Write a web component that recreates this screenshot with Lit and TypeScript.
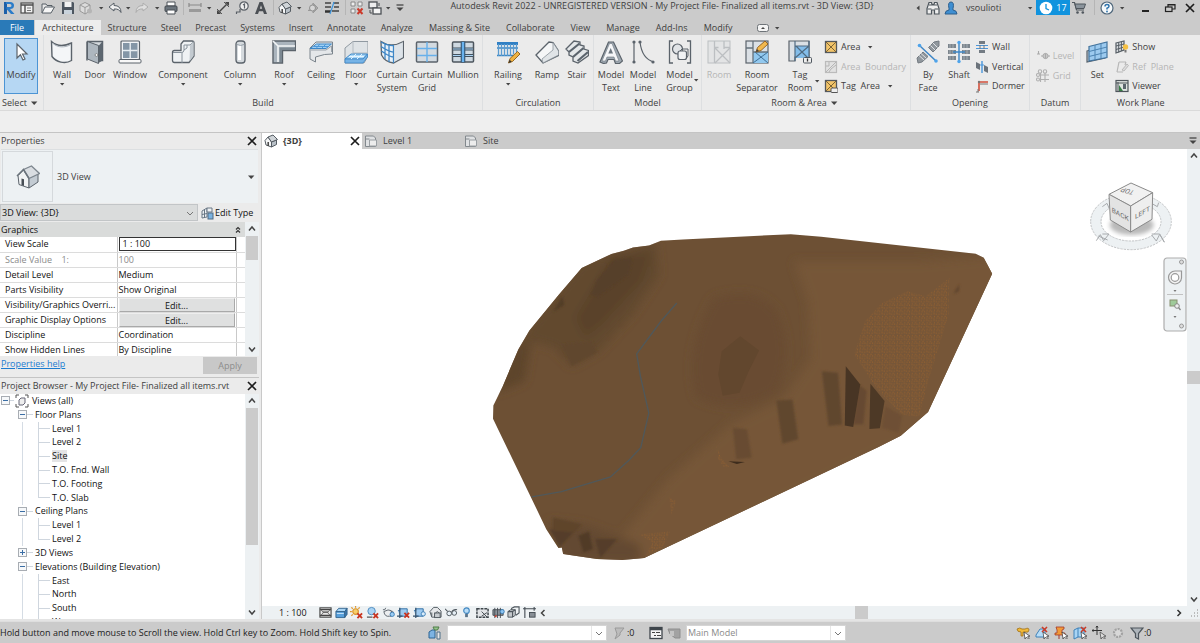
import { LitElement, html, svg, css, nothing } from "lit";
import { customElement, property } from "lit/decorators.js";

/* ---------- icons: large ones on a 24 grid, small ones on a 14 grid ---------- */

const G = "#5b636b";
const B = "#3d86c6";

const BIG: Record<string, unknown> = {
  cursor: svg`<path d="M8 4v14l3.400-3.200 2.600 5.200 2-1-2.500-5H18z" fill="#fff" stroke="${G}" stroke-width="1.200"/>`,
  house: svg`<path d="M2 10.500L7.500 5 13 13v10L3 19.500z" fill="#f1f3f4" stroke="${G}"/><path d="M13 13l9-4.500V17l-9 6z" fill="#c3cbd2" stroke="${G}"/><path d="M7.500 4.500L15.500 1l8 7.500L13 13.500z" fill="#d9dde1" stroke="#7d868e" stroke-width="1.300"/><path d="M1 11l6.500-6.500L13 13.500" fill="none" stroke="#6b747c" stroke-width="1.500"/><path d="M5.500 13.500l2.500.8V21l-2.500-1z" fill="#474e55"/>`,
  wall: svg`<path d="M1.500 1.500C7 6.500 15 6 21.500 3v17.500C15 24.500 6 22 2 16.500z" fill="#f4f6f8" stroke="${G}" stroke-width="1.400"/><path d="M3 3.500C8 8 15 7.500 20 5" fill="none" stroke="#aab2ba"/>`,
  door: svg`<path d="M4 1.500h15.500v19H16M4 20.500V1.500" fill="#d5dade" stroke="${G}" stroke-width="1.500"/><path d="M19.500 1.500v19l-4 2.500V6z" fill="#5d6770"/><path d="M4.500 1.500l11 4v18l-11-4.500z" fill="#aeb7bf" stroke="${G}"/><circle cx="13.500" cy="15" r="1.400" fill="#fff" stroke="#555" stroke-width=".6"/>`,
  window: svg`<rect x="3" y="1" width="18.500" height="18.500" rx="1" fill="#f1f3f5" stroke="${G}" stroke-width="1.200"/><path d="M5 3h14.500v15H5z" fill="#8496a6"/><path d="M12.200 3v15M5 10.500h14.500" stroke="#e8eef2" stroke-width="1.400"/><rect x="1" y="19.500" width="22" height="3.500" rx="1" fill="#f8f8f8" stroke="${G}"/>`,
  component: svg`<path d="M1.500 12.500q0-2 2-2H10V4l2.500-3H21q2 0 2 2v13l-5 6.500H3.500q-2 0-2-2z" fill="#eff2f4" stroke="${G}" stroke-width="1.300"/><path d="M2 12.500h8.500q2.500 0 2.500-2.500V5h6l4-3.500M11 12v11M13 10l3-2V5" fill="none" stroke="#88929b"/><path d="M19 5.500L22.500 2v14L18.500 21.500z" fill="#c3cad0"/>`,
  column: svg`<rect x="8" y="1" width="9" height="22" rx="3" fill="#d5dade" stroke="${G}" stroke-width="1.300"/><path d="M11.500 5v15" stroke="#fff" stroke-width="3"/><path d="M9 4.500q3.500 2 7 0" fill="none" stroke="#97a1aa"/>`,
  roof: svg`<path d="M1 1h22.500v9.500H10.500V23H1z" fill="#aab4bd" stroke="${G}" stroke-width="1.400"/><path d="M1 1l5 5v16M6 6h17" fill="none" stroke="#f3f5f6" stroke-width="1.600"/><path d="M7.500 7.500H23V10H10v12H7.500z" fill="#7b8791"/>`,
  ceiling: svg`<path d="M1 8l6-6h16.500v12l-8 .5-9 2.500V22L1 19z" fill="#e4e7ea" stroke="#7b848c"/><path d="M1 8.500L7.500 4h15L17 8.500z" fill="#9fd0f5" stroke="${B}"/><path d="M4.500 6.500h15M11 4L7 8.500M17 4l-4.500 4.500" stroke="#4e98d8"/><path d="M2 10h15l5.500-4v6" fill="none" stroke="#9aa2a9"/>`,
  floor: svg`<path d="M1 17V8l8-6.500h15V16l-4 7H1z" fill="#dfe3e6" stroke="#9099a1"/><path d="M9 1.500V13M9 13h14" stroke="#b4bbc1"/><path d="M1 19l6-5h16.500l-4.500 5z" fill="#a9d7f7" stroke="${B}"/><path d="M1 19v4h18l4.500-6v-3L19 19z" fill="#76b3e6" stroke="${B}" stroke-width=".8"/><path d="M5 16.500h15M12 14l-5 5M18 14l-5 5" stroke="#e4f4ff"/>`,
  curtainSystem: svg`<path d="M1 1.500q10 7 22.500 0v16l-10 5.500Q5 22 1.500 15z" fill="#e9f1f8" stroke="${G}" stroke-width="1.300"/><path d="M1 6.500q9 6 13 5.500M1.500 11q8 6 12 6M5 4v15M9 6v16M13.500 6v17M1 2q7 4 13 3.500" fill="none" stroke="${B}" stroke-width="1.300"/><path d="M14 6l9-4v15l-9 5z" fill="#d5dbe0" opacity=".6"/>`,
  curtainGrid: svg`<rect x="1.500" y="2" width="21" height="20" rx="1" fill="#d3dae0" stroke="${G}" stroke-width="1.500"/><path d="M12 2v20M2 8.500h20M2 15.500h20" stroke="#67b0ea" stroke-width="1.400"/>`,
  mullion: svg`<rect x="1.500" y="2" width="21" height="20" rx="1" fill="#cfd9e1" stroke="#4d565e" stroke-width="1.500"/><path d="M2 9h20M2 15.500h20" stroke="#44525f" stroke-width="3"/><path d="M2 9h20M2 15.500h20" stroke="#a9d2f2" stroke-width="1.200"/><path d="M12 1.500v21" stroke="#34536e" stroke-width="4.600"/><path d="M12 2v20" stroke="#69b2ee" stroke-width="2.400"/>`,
  railing: svg`<path d="M1 2h21v3H1z" fill="#2f7fc4"/><path d="M1 8h21M1 15.500h20" stroke="#3a86c5" stroke-width="1.600"/><path d="M2.500 4v12M5.500 4v12M8.500 4v12M11.500 4v12M14.500 4v12M17.500 4v10M20.500 4v8" stroke="#5a9bd0" stroke-width="1.300"/><path d="M12.500 23l1.500-4.500 7.500-7 2.500 2.500-7.500 7.500z" fill="#f0b341" stroke="#8a5b16" stroke-width=".9"/><path d="M12.500 23l1.200-3.200 2 2z" fill="#333"/>`,
  ramp: svg`<path d="M1 15L14 2l4 .5 5.500 8.500v4.500L8 23z" fill="#f5f6f7" stroke="${G}" stroke-width="1.300"/><path d="M18 2.500l5.500 8.500v4L8 23l-1-4 11-9z" fill="#e0e4e7" stroke="#8a939b" stroke-width=".8"/>`,
  stair: svg`<path d="M1 9L9 1l6 1v3l4 1v3l4.500 1.500v5L13 23l-5-2v-4l-4-2v-3z" fill="#e5e8ea" stroke="${G}" stroke-width="1.300"/><path d="M4 12L14.500 3.500M8 17l10.500-9M12.500 21L23 12" stroke="#5b646d" stroke-width="2.200"/>`,
  modelText: svg`<path d="M1 22L9.500 2h5L23.500 21l-3 2.500h-4l-1.500-4H9l-1.500 3.500-3 .5z" fill="#9fa9b2" stroke="${G}" stroke-width="1.200"/><path d="M3 21L10.500 3.500h2.500L20 21h-3.500l-1.500-4H8l-1.500 4z" fill="#f5f6f8" stroke="#6c757d" stroke-width=".6"/><path d="M9.300 13.500L11.700 8l2.300 5.500z" fill="#6d7780"/>`,
  modelLine: svg`<path d="M3 2v20M9 2q2 17 14 20" fill="none" stroke="${G}" stroke-width="1.200"/><circle cx="3" cy="2" r="1.600" fill="${G}"/><circle cx="3" cy="22" r="1.600" fill="${G}"/><circle cx="9" cy="2" r="1.600" fill="${G}"/><circle cx="22" cy="22" r="1.600" fill="${G}"/>`,
  modelGroup: svg`<path d="M5 1H1.500v22H5M19 1h3.500v22H19" fill="none" stroke="${G}" stroke-width="1.300"/><circle cx="9.500" cy="9" r="5" fill="#e1e4e7" stroke="${G}" stroke-width="1.200"/><rect x="10" y="11" width="8.500" height="8.500" rx="2" fill="#f0f2f4" stroke="${G}" stroke-width="1.200"/><path d="M12 11l2-2h6v7l-1.500 2" fill="none" stroke="${G}"/>`,
  room: svg`<g stroke="#bcbfc2" fill="#e3e4e5"><rect x="1" y="1" width="22" height="22"/><path d="M7.500 1v22M7.500 7.500h4M17 7.500h6M7.500 7.500L23 23M23 8L8 23M17 1v8" fill="none" stroke-width="1.300"/></g>`,
  roomSeparator: svg`<rect x="1" y="1" width="22" height="22" fill="#dbe0e5" stroke="${G}" stroke-width="1.200"/><path d="M8 12h15v11H8z" fill="#92c8ee"/><path d="M8 1v22M1 8h7M8 12h15" stroke="#66717b" stroke-width="1.300"/><path d="M8 23l15-11M10 12l13 11" stroke="#3f6f96"/><path d="M11 12l1.500-4.500L20 1l3 3-7 6.500z" fill="#f1b84e" stroke="#8c5a1b" stroke-width=".9"/><path d="M11 12l1-3 2 2z" fill="#444"/>`,
  tagRoom: svg`<path d="M1 1h20v16H7v4H1z" fill="#dbe0e5" stroke="${G}" stroke-width="1.200"/><path d="M7 6h14v12H7z" fill="#83bdea"/><path d="M7 1v20M7 6h14M7 18L21 6M8 6l12 12M21 1v17" stroke="#506b82" stroke-width="1.200"/><rect x="15.500" y="17.500" width="8" height="5.500" rx="1" fill="#eee" stroke="#4f575f"/><path d="M19.500 18.500v3" stroke="#333" stroke-width="1.300"/>`,
  byFace: svg`<path d="M12.500 7.500L18 2l5-1v5l-6 6zM1 18l6-6 5 4.500-6 5.500-4 1z" fill="#90979d" stroke="#747b82"/><path d="M14.500 5.500l5 5M17 3l4.500 4.500M3 15.500l5 4.500M5 13.500l5 4.500" stroke="#dfe2e5" stroke-width="1"/><path d="M3.500 5.500L20 21" stroke="${B}" stroke-width="1.500"/><circle cx="3.500" cy="5.500" r="1.800" fill="#4ea3ea"/><circle cx="20" cy="21" r="1.800" fill="#4ea3ea"/>`,
  shaft: svg`<path d="M1 4h8v4H1zM15 4h8v4h-8zM1 10h8v4H1zM15 10h8v4h-8zM1 16h8v4H1zM15 16h8v4h-8z" fill="#7c858d"/><path d="M3 4v4M6 4v4M17 4v4M20 4v4M3 10v4M6 10v4M17 10v4M20 10v4M3 16v4M6 16v4M17 16v4M20 16v4" stroke="#b9c0c6" stroke-width=".7"/><path d="M12 2v20M6 12h12" stroke="${B}" stroke-width="1.400"/><circle cx="12" cy="2.500" r="1.700" fill="#4ea3ea"/><circle cx="12" cy="21.500" r="1.700" fill="#4ea3ea"/>`,
  set: svg`<path d="M2 11l3-1v8l15-3v3L2 22z" fill="#c6cbd0" stroke="#56616b" stroke-width="1.200"/><path d="M4 6.500L22 2v15.500L4 21z" fill="#9ccaef" stroke="#42729c" stroke-width="1.200"/><path d="M10 5v15M16 3.500V18.500M4 11.500l18-4.500M4 16.500l18-4.500" stroke="#4c83b1"/>`,
};

const SMALL: Record<string, unknown> = {
  revit: svg`<path d="M2 1h3v12H2z" fill="#1c5fa8"/><path d="M4 1h4q4 0 4 3.500T8 8L12.500 13H9L4.500 8V6H8q1.500 0 1.500-1.500T8 3H4z" fill="#2b7cc9"/>`,
  panel: svg`<rect x="1" y="2" width="12" height="10" fill="#f2f2f2" stroke="#4c4c4c" stroke-width="1.200"/><path d="M1 4h12M5 4v8" stroke="#4c4c4c" stroke-width="1.400"/><path d="M7 7h4M7 9.500h4" stroke="#777"/>`,
  open: svg`<path d="M1 12V3h4l1 1.500h5V6" fill="#e8e8e8" stroke="#575f66"/><path d="M1 12l3-6h9.500L10 12z" fill="#f6f6f6" stroke="#575f66"/>`,
  save: svg`<path d="M1 1h11l1 1v11H1z" fill="#4d5660"/><path d="M3.500 1h7v5h-7z" fill="#f3f3f3"/><path d="M3 9h8v4H3z" fill="#c9d3dc"/>`,
  sync: svg`<path d="M1 4l5-2.500L11 4v6l-5 3-5-3z" fill="#dcdcdc" stroke="#999"/><path d="M1 4l5 2.500L11 4M6 6.500V13" stroke="#999" fill="none"/><circle cx="10.500" cy="10" r="2.500" fill="#b5b5b5"/>`,
  undo: svg`<path d="M1 6l5-4v2.500q7 0 7 7-2-4-7-3.500V10z" fill="#f1f1f1" stroke="#555d65"/>`,
  redo: svg`<path d="M13 6L8 2v2.500q-7 0-7 7 2-4 7-3.500V10z" fill="#dedede" stroke="#adadad"/>`,
  print: svg`<path d="M3 1h8v4H3z" fill="#fff" stroke="#4a5056"/><rect x="1" y="5" width="12" height="5.500" rx="1" fill="#6c757d" stroke="#454b51"/><path d="M3 9h8v4H3z" fill="#fff" stroke="#4a5056"/>`,
  dim: svg`<path d="M1 4h12M1 2v4M13 2v4" stroke="#8a8a8a" stroke-width="1.200"/><path d="M1 8h12v3H1z" fill="#9a9a9a"/>`,
  measure: svg`<path d="M2.500 11.500l9-9" stroke="#444" stroke-width="1.400"/><path d="M1 9v4h4zM13 5V1H9z" fill="#444"/><path d="M1 8l5 5M8 1l5 5" stroke="#555"/>`,
  tag: svg`<circle cx="9" cy="5" r="4.200" fill="#eee" stroke="#5a6067" stroke-width="1.200"/><path d="M8 4l1.500-1v4.500M5 8v3H1.500v2" fill="none" stroke="#5a6067" stroke-width="1.200"/>`,
  textA: svg`<path d="M1 13L5.500 1h3L13 13h-3L9 10.200H5L4 13zM5.800 7.800h2.400L7 4.300z" fill="#4b4f54" fill-rule="evenodd"/>`,
  house: svg`<path d="M1 6.500L4 3l3.500 5v5L2 11z" fill="#f5f6f7" stroke="#555c63"/><path d="M7.500 8L12.500 6v4.500L7.500 13z" fill="#b9c1c8" stroke="#555c63"/><path d="M4 3l5-2 4.500 4.500-6 2.500z" fill="#cfd4d8" stroke="#555c63"/><path d="M4.200 8v4" stroke="#444" stroke-width="1.500"/>`,
  section: svg`<path d="M7 2l5 5-5 5V9.500H2M7 2v2.500" fill="#ababab" stroke="#999"/><circle cx="6.500" cy="7" r="3" fill="#d6d6d6" stroke="#909090"/>`,
  thin: svg`<path d="M0 2h6M0 6h6M8 2h6M9 6h5M7 10h7" stroke="#444" stroke-width="1.500"/><path d="M0 10.500h6" stroke="#333" stroke-width="2.500"/><path d="M9 1L5 13" stroke="#3f97df" stroke-width="1.200"/>`,
  closeViews: svg`<path d="M1 1h4v4H1zM8 1h4v4H8zM1 8h4v4H1z" fill="#eee" stroke="#888"/><path d="M7.500 7.500l5 5.500M12.500 7.500l-5 5.500" stroke="#cc3a2b" stroke-width="2"/>`,
  switchViews: svg`<rect x="1" y="1" width="8" height="6" fill="#eee" stroke="#4b4f53" stroke-width="1.300"/><rect x="5" y="7" width="8" height="6" fill="#f5f5f5" stroke="#4b4f53" stroke-width="1.300"/><path d="M11 2v3M2 9v3h2" stroke="#4b4f53" fill="none"/>`,
  customise: svg`<path d="M3.500 4h7" stroke="#444" stroke-width="1.300"/><path d="M3.500 6.500h7L7 10z" fill="#444"/>`,
  binoculars: svg`<path d="M3 1.500h2.500l.5 2h2l.5-2H11l2 6V13H8.500V9h-3v4H1V7.500z" fill="#eee" stroke="#4e565d" stroke-width="1.200"/><path d="M1.500 8h4M8.500 8h4M3 4h8" stroke="#4e565d"/>`,
  user: svg`<path d="M1 13q0-3.500 4-4V7.500Q3.500 1 7 1t2 6.500V9q4 .5 4 4z" fill="#3f8fd2" stroke="#2d5f8d"/>`,
  clock: svg`<circle cx="7" cy="7" r="6.300" fill="#fff"/><path d="M7 3v4.500l3 1.500" fill="none" stroke="#1193de" stroke-width="1.300"/>`,
  cart: svg`<path d="M0 1.500h2.500L4.500 9H12" fill="none" stroke="#4f565d" stroke-width="1.200"/><path d="M3 3h10.500L12 7.500H4z" fill="#8b949c" stroke="#4f565d"/><circle cx="5.500" cy="11.500" r="1.300" fill="#4f565d"/><circle cx="10.800" cy="11.500" r="1.300" fill="#4f565d"/>`,
  help: svg`<circle cx="7" cy="7" r="6" fill="#f5f8fa" stroke="#50687c" stroke-width="1.200"/><path d="M5 5.500Q5 3.500 7 3.500t2 1.700Q9 6.300 7 7.200v1.300" fill="none" stroke="#2f74ad" stroke-width="1.500"/><circle cx="7" cy="10.500" r=".9" fill="#2f74ad"/>`,
  minimise: svg`<path d="M4 10h7" stroke="#222" stroke-width="2"/>`,
  restore: svg`<rect x="2.500" y="6" width="6.500" height="4.500" fill="none" stroke="#222" stroke-width="1.200"/><path d="M5 6V3.500h7V8H9M5 4h7" fill="none" stroke="#222" stroke-width="1.200"/>`,
  close: svg`<path d="M3 3l8 8M11 3l-8 8" stroke="#1d1d1d" stroke-width="1.700"/>`,
  area: svg`<rect x="1.500" y="1.500" width="11" height="11" fill="#f2c469" stroke="#54585c" stroke-width="1.300"/><path d="M2 2l10 10M12 2L2 12" stroke="#7c6435"/>`,
  areaBoundary: svg`<rect x="1.500" y="1.500" width="11" height="11" fill="#e2e2e2" stroke="#bbb" stroke-width="1.200"/><path d="M2 12L12 2M5 2v4M2 6h3M5 12l2-3 5-4" stroke="#b5b5b5" fill="none"/>`,
  tagArea: svg`<rect x="1.500" y="1.500" width="11" height="11" fill="#f2c469" stroke="#54585c" stroke-width="1.300"/><path d="M2 2l10 10M12 2L2 12" stroke="#7c6435"/><rect x="7" y="9" width="7" height="4.500" rx="1" fill="#eee" stroke="#555"/>`,
  openWall: svg`<path d="M4 1h6v3H4zM4 10h6v3H4z" fill="#737b83"/><path d="M1 5.500h12M1 8.500h12" stroke="#4b97dc" stroke-width="1.200"/><path d="M5 5v4M9 5v4" stroke="#777"/>`,
  vertical: svg`<path d="M1 2l4 2v6L1 8zM9 5l4 2v6l-4-2z" fill="#6b737b"/><path d="M7 1v12" stroke="#4b97dc" stroke-width="1.400"/><path d="M5 5h4" stroke="#4b97dc"/>`,
  dormer: svg`<path d="M4 12V3h9" fill="none" stroke="#d2503c" stroke-width="1.600"/><path d="M1 13h3M3 10v3M5 5h8" stroke="#777"/><circle cx="4" cy="3" r="1.200" fill="#777"/>`,
  level: svg`<path d="M1 5h3M2.500 2v3M5 7h9" stroke="#aaa" stroke-width="1.100"/><circle cx="9.500" cy="7" r="2.600" fill="#c9c9c9" stroke="#aaa"/><path d="M9.500 4.500v5" stroke="#aaa"/>`,
  grid: svg`<g fill="none" stroke="#b0b0b0" stroke-width="1.100"><circle cx="4" cy="2.500" r="1.700"/><circle cx="9" cy="2.500" r="1.700"/><circle cx="2" cy="6" r="1.500"/><circle cx="2" cy="10.500" r="1.500"/><path d="M4.500 4v9M9 4v9M4 6h9M4 10.500h9"/></g>`,
  show: svg`<path d="M1 3l8-2v9l-8 3z" fill="#d9dde0" stroke="#555d64" stroke-width="1.200"/><path d="M3.700 2.500v10M6.400 2v9M1 6l8-2M1 9.500l8-2.500" stroke="#555d64"/><circle cx="10.500" cy="7" r="2.700" fill="#f5c043"/><path d="M9.500 10h2v2.500h-2z" fill="#777"/>`,
  refPlane: svg`<path d="M4 2h7M2 12h6M4 2L2 12M11 2l-1 3" stroke="#b7b7b7" fill="none" stroke-width="1.200"/><path d="M7 10l5-6 1.500 1.500L9 11z" fill="#ddd" stroke="#bbb"/>`,
  viewer: svg`<rect x="1" y="1.500" width="12" height="11" fill="#dfe4e0" stroke="#4e555b" stroke-width="1.200"/><path d="M3 3v9M1 4h12" stroke="#4e555b"/><path d="M4 6l4 6H4z" fill="#387d46"/><path d="M8 5h3v5H8z" fill="#5b656d"/>`,
  cursorTab: svg`<rect x="1.500" y="3.500" width="11" height="7" rx="2" fill="#f4f4f4" stroke="#6e7378"/><path d="M5 8l2-2 2 2z" fill="#444"/>`,
  editType: svg`<path d="M2 5L7 2v9l-5 1zM2 8.500l5-1M4.500 4v8" fill="#eef2f5" stroke="#687684"/><path d="M7 2h5v4H7z" fill="#eef2f5" stroke="#687684"/><rect x="8" y="7" width="5" height="6" fill="#7ab2df" stroke="#4f6b85"/>`,
  views: svg`<path d="M4 1H1v3M10 1h3v3M4 13H1v-3M10 13h3v-3" fill="none" stroke="#555"/><path d="M4 6l2-2h4v5l-2 2H4z" fill="#eee" stroke="#667"/>`,
  page: svg`<path d="M1.500 2h8l2 2v8.500h-10z" fill="#dfe1e3" stroke="#82888d"/><path d="M5.500 6h7v6h-7z" fill="#ededed" stroke="#9a9fa3"/><path d="M1.500 5h4" stroke="#82888d"/>`,
  detail: svg`<rect x="1" y="2" width="12" height="10" fill="#e8e8e8" stroke="#444" stroke-width="1.200"/><path d="M1 4h12M1 10h12M4 6.500h6" stroke="#444" stroke-width="1.300"/><path d="M2 4l3 3-3 3M12 4L9 7l3 3" fill="none" stroke="#666"/>`,
  style: svg`<path d="M1 6l3-3.500h9L10.500 6z" fill="#a9d5f5" stroke="#34658e"/><path d="M1 6h9.500v6.500H1z" fill="#57a0dc" stroke="#34658e"/><path d="M10.500 6L13 2.500V9l-2.500 3.500z" fill="#3a78ad" stroke="#34658e"/><path d="M2 8h7.500" stroke="#d5ecfd"/>`,
  sun: svg`<circle cx="6" cy="6" r="3" fill="#f7cf6a" stroke="#d9932b" stroke-width="1.200"/><path d="M6 0v2M0 6h2M1.500 1.500L3 3M10.500 1.500L9 3M1.500 10.500L3 9" stroke="#e0982c" stroke-width="1.300"/><path d="M8 8l5 5M13 8l-5 5" stroke="#c9341f" stroke-width="2"/>`,
  shadow: svg`<circle cx="6" cy="5.500" r="4" fill="#a9d3f3" stroke="#4a88bd"/><path d="M1 12h6" stroke="#666" stroke-width="1.500"/><path d="M8 8l5 5M13 8l-5 5" stroke="#c9341f" stroke-width="2"/>`,
  render: svg`<path d="M1 4h2l1-2M2 6q1 6 6 5h2V5q-3-2-8 1zM10 6q3-1 2 3" fill="#eceef0" stroke="#59616a"/><circle cx="11" cy="9" r="2.300" fill="#9bcdf5" stroke="#3c7fb8"/>`,
  crop: svg`<path d="M1 5h2V3h8v8H3" fill="#9dcaf0" stroke="#2f6da3"/><path d="M0 11h6M3 2v11" stroke="#36536d" stroke-width="1.300"/><path d="M8 7.500l5 5M13 7.500l-5 5" stroke="#c9341f" stroke-width="2"/>`,
  cropShow: svg`<path d="M1 5h2V3h8v8H3" fill="#9dcaf0" stroke="#2f6da3"/><path d="M0 11h6M3 2v11" stroke="#36536d" stroke-width="1.300"/><circle cx="11" cy="8.500" r="2.300" fill="#d8ecfb" stroke="#3c7fb8"/>`,
  lock: svg`<path d="M1 6l4-4.500h4l4 4V12H3z" fill="#e6e8ea" stroke="#4e565d"/><rect x="6" y="7.500" width="6" height="5" fill="#c7ccd0" stroke="#4e565d"/><path d="M7 7.500q2-3 4 0M3 7v4" fill="none" stroke="#4e565d"/>`,
  glasses: svg`<path d="M0 3l3 3M7 7q2-4 6-3" fill="none" stroke="#4e565d" stroke-width="1.200"/><circle cx="4.500" cy="8" r="2.500" fill="#e6f0f7" stroke="#4e565d"/><circle cx="10" cy="7.500" r="2.500" fill="#e6f0f7" stroke="#4e565d"/>`,
  bulb: svg`<circle cx="7" cy="5" r="3" fill="#b8dcf7" stroke="#4187c0" stroke-width="1.200"/><path d="M5.500 8.500h3v3.500h-3z" fill="#5b748a"/>`,
  tempProps: svg`<rect x="1" y="3" width="12" height="9" fill="#e2e5e8" stroke="#3f464c" stroke-width="1.600" stroke-dasharray="3 1"/><path d="M6 6l6 6M12 7l-6 4" stroke="#3f464c"/>`,
  analytical: svg`<path d="M1 4h11v6H1z" fill="#8d959c" stroke="#444c53"/><path d="M3 2v11M6 2v11M9 2v11" stroke="#444c53"/><circle cx="11" cy="6" r="2.200" fill="#8cc4f2" stroke="#3c7fb8"/><path d="M3 11h2" stroke="#c43" stroke-width="2"/>`,
  displace: svg`<path d="M1 6l3-2h5v6l-3 2H1z" fill="#c3c8cc" stroke="#4e565d"/><path d="M5 4V2.500L8 1h5v6.500L9.500 10M1 6h5v6M6 6l3-2" fill="none" stroke="#4e565d" stroke-width="1.200"/>`,
  constraints: svg`<path d="M2 1v12M0 3h14M12 1v4" stroke="#444c53" stroke-width="1.200"/><rect x="7" y="7" width="6" height="5" fill="#888f96" stroke="#444c53"/>`,
  people: svg`<path d="M1 6l3-2h3v8H1z" fill="#7cb3e2" stroke="#2d6594"/><path d="M5 1h6l-1.500 3h-3z" fill="#95c48c" stroke="#4f7d48"/><path d="M9 6h3v7H9z" fill="#e7e7e7" stroke="#4d6e88"/>`,
  pencilGrey: svg`<path d="M3 2h9l-4 5v2l-5 4 2-5z" fill="#bcbcbc" stroke="#9a9a9a"/>`,
  options: svg`<rect x="1" y="1.500" width="12" height="11" fill="#f4f4f4" stroke="#3f464c" stroke-width="1.300"/><path d="M1 3h12" stroke="#3f464c" stroke-width="2.500"/><path d="M3 6.500h3M7 6.500h4M5 9.500h2M8 9.500h4" stroke="#444"/>`,
  optionsGrey: svg`<path d="M1 3h12v9H8L3 8z" fill="#a2a2a2" stroke="#8e8e8e"/><path d="M3 5h4v5H3z" fill="#c4c4c4"/>`,
  selLinks: svg`<path d="M1 3q3-2 5 0h3q4-2 4 1t-4 2H7v4H5V6Q1 6 1 3z" fill="#f0b93a" stroke="#a0701a" stroke-width=".8"/><path d="M8 6l1 7 1.500-2 2 2 .8-.8-1.600-2H14z" fill="#fff" stroke="#333" stroke-width=".7"/>`,
  selUnderlay: svg`<path d="M1 9l4-6h5v8H1z" fill="#b6dcf7" stroke="#3f81b8"/><path d="M7 1l5 5M12 1L7 6" stroke="#cb3b27" stroke-width="1.600"/><path d="M8 6l1 7 1.500-2 2 2 .8-.8-1.600-2H14z" fill="#fff" stroke="#333" stroke-width=".7"/>`,
  selPinned: svg`<path d="M2 1h8v2L8 4v3h3v2H1V7h2V4z" fill="#f09a3a" stroke="#a3372a" stroke-width=".8"/><path d="M5 9v4" stroke="#a3372a"/><path d="M8 6l1 7 1.500-2 2 2 .8-.8-1.600-2H14z" fill="#fff" stroke="#333" stroke-width=".7"/>`,
  selFace: svg`<path d="M1 4l4-2v9l-4 2zM5 2h6v9H5" fill="#a8d4f4" stroke="#3f81b8"/><path d="M8 1l5 5M13 1L8 6" stroke="#cb3b27" stroke-width="1.600"/><path d="M8 6l1 7 1.500-2 2 2 .8-.8-1.600-2H14z" fill="#fff" stroke="#333" stroke-width=".7"/>`,
  selDrag: svg`<path d="M5 0v9M0 4.500h10M4 1.500L5 0l1 1.500M1.500 3.500L0 4.500l1.500 1" stroke="#333" fill="none"/><path d="M8 6l1 7 1.500-2 2 2 .8-.8-1.600-2H14z" fill="#ddd" stroke="#444" stroke-width=".7"/>`,
  gear: svg`<circle cx="7" cy="7" r="4" fill="#d8d8d8" stroke="#a2a2a2" stroke-width="2.200" stroke-dasharray="2 1"/>`,
  filter: svg`<path d="M1 2h12L8.500 7.500V13l-3-1.500v-4z" fill="#aeb5bb" stroke="#4d555c" stroke-width="1.200"/>`,
  chevDown: svg`<path d="M4 5.500L7 9l3-3.500" fill="none" stroke="#444" stroke-width="1.500"/>`,
  chevThin: svg`<path d="M4 6l3 3 3-3" fill="none" stroke="#777"/>`,
  chevUp: svg`<path d="M4 8.500L7 5l3 3.500" fill="none" stroke="#444" stroke-width="1.500"/>`,
  chevLeft: svg`<path d="M8.500 4L5.500 7l3 3" fill="none" stroke="#444" stroke-width="1.500"/>`,
  chevRight: svg`<path d="M5.500 4l3 3-3 3" fill="none" stroke="#333" stroke-width="1.500"/>`,
  collapse: svg`<path d="M5 6.500l2-2 2 2M5 9.500l2-2 2 2" fill="none" stroke="#333" stroke-width="1.200"/>`,
  caret: svg`<path d="M5 6h4.400L7.200 8.600z" fill="#444"/>`,
  caretBig: svg`<path d="M4 5.500h6.400L7.200 9z" fill="#444"/>`,
  caretLeft: svg`<path d="M8.500 4.500v5L5.500 7z" fill="#444"/>`,
  grip: svg`<path d="M11 4h1M8 7h1M11 7h1M5 10h1M8 10h1M11 10h1" stroke="#aaa" stroke-width="1.500"/>`,
};

const small = (name: string) => html`<svg class="s" viewBox="0 0 14 14" aria-hidden="true">${SMALL[name]}</svg>`;
const big = (name: string) => html`<svg class="b" viewBox="0 0 24 24" aria-hidden="true">${BIG[name]}</svg>`;

const base = css`
  :host, * { box-sizing: border-box; }
  button, input, select { font: inherit; color: inherit; margin: 0; padding: 0; border: 0; border-radius: 0; background: none; }
  svg { display: block; flex: none; }
  .s { width: 14px; height: 14px; }
  .b { width: 24px; height: 24px; }
`;

/* ---------- title bar ---------- */

type Cell = [icon: string, width: number, label?: string];

const QUICK: Cell[] = [
  ["revit", 18, "Revit"], ["panel", 18, "Home"], ["open", 24, "Open"], ["save", 16, "Save"],
  ["sync", 20, "Synchronize"], ["caret", 10], ["undo", 18, "Undo"], ["caret", 8], ["redo", 20, "Redo"],
  ["caret", 10], ["print", 18, "Print"], ["|", 6], ["dim", 18, "Measure"], ["caret", 10],
  ["measure", 18, "Aligned dimension"], ["tag", 20, "Tag"], ["textA", 18, "Text"], ["|", 6],
  ["house", 18, "Default 3D view"], ["caret", 10], ["section", 18, "Section"], ["thin", 20, "Thin lines"],
  ["|", 6], ["closeViews", 18, "Close inactive"], ["switchViews", 18, "Switch windows"], ["caret", 8],
  ["customise", 16, "Customize"],
];
const SEARCH: Cell[] = [["caretLeft", 12, "Collapse search"], ["binoculars", 18, "Search"], ["user", 18, "Account"]];
const WINDOW: Cell[] = [["cart", 18, "Store"], ["|", 12], ["help", 14, "Help"], ["caret", 16],
  ["minimise", 30, "Minimize"], ["restore", 20, "Restore"], ["close", 20, "Close"]];

@customElement("title-bar")
class TitleBar extends LitElement {
  static styles = [base, css`
    :host { display: flex; height: 20px; background: #cbcbcb; }
    .group { display: flex; align-items: center; height: 15px; }
    .cell { display: flex; justify-content: center; align-items: center; height: 15px; }
    .rule { width: 1px; height: 15px; background: #b5b5b5; }
    h1 { flex: 1; margin: 0; padding-left: 4px; font-size: 9px; line-height: 12px; font-weight: 400; text-align: center; white-space: nowrap; }
    .name { width: 64px; padding-left: 6px; }
    .trial { display: flex; align-items: center; justify-content: center; gap: 3px; width: 34px; height: 15px; background: #1193de; color: #fff; }
  `];
  private cell = ([icon, width, label]: Cell) => icon === "|"
    ? html`<span class="cell" style="width:${width}px"><span class="rule"></span></span>`
    : html`<button class="cell" style="width:${width}px" aria-label=${label ?? "More"}>${small(icon)}</button>`;
  render() {
    return html`
      <div class="group">${QUICK.map(this.cell)}</div>
      <h1>Autodesk Revit 2022 - UNREGISTERED VERSION - My Project File- Finalized all items.rvt - 3D View: {3D}</h1>
      <div class="group">
        ${SEARCH.map(this.cell)}
        <span class="name">vsoulioti</span>
        ${this.cell(["caret", 12])}
        <button class="trial" aria-label="17 days left">${small("clock")}17</button>
        ${WINDOW.map(this.cell)}
      </div>`;
  }
}

/* ---------- ribbon ---------- */

type Tool = { icon: string; label: string; width: number; caret?: "below" | "side"; off?: boolean; on?: boolean };
type Row = { icon: string; label: string; caret?: boolean; off?: boolean };
type Panel = { title: string; caret?: boolean; tools: Tool[]; rows?: Row[] };

const TABS = ["Architecture", "Structure", "Steel", "Precast", "Systems", "Insert", "Annotate"];
const MORE_TABS = ["Analyze", "Massing & Site", "Collaborate", "View", "Manage", "Add-Ins", "Modify"];

const PANELS: Panel[] = [
  { title: "Select", caret: true, tools: [{ icon: "cursor", label: "Modify", width: 34, on: true }] },
  { title: "Build", tools: [
    { icon: "wall", label: "Wall", width: 36, caret: "below" },
    { icon: "door", label: "Door", width: 30 },
    { icon: "window", label: "Window", width: 40 },
    { icon: "component", label: "Component", width: 66, caret: "below" },
    { icon: "column", label: "Column", width: 48, caret: "below" },
    { icon: "roof", label: "Roof", width: 40, caret: "below" },
    { icon: "ceiling", label: "Ceiling", width: 34 },
    { icon: "floor", label: "Floor", width: 36, caret: "below" },
    { icon: "curtainSystem", label: "Curtain System", width: 36 },
    { icon: "curtainGrid", label: "Curtain Grid", width: 34 },
    { icon: "mullion", label: "Mullion", width: 38 },
  ] },
  { title: "Circulation", tools: [
    { icon: "railing", label: "Railing", width: 50, caret: "below" },
    { icon: "ramp", label: "Ramp", width: 28 },
    { icon: "stair", label: "Stair", width: 32 },
  ] },
  { title: "Model", tools: [
    { icon: "modelText", label: "Model Text", width: 34 },
    { icon: "modelLine", label: "Model Line", width: 30 },
    { icon: "modelGroup", label: "Model Group", width: 43, caret: "side" },
  ] },
  { title: "Room & Area", caret: true, tools: [
    { icon: "room", label: "Room", width: 34, off: true },
    { icon: "roomSeparator", label: "Room Separator", width: 42 },
    { icon: "tagRoom", label: "Tag Room", width: 44, caret: "side" },
  ], rows: [
    { icon: "area", label: "Area", caret: true },
    { icon: "areaBoundary", label: "Area  Boundary", off: true },
    { icon: "tagArea", label: "Tag  Area", caret: true },
  ] },
  { title: "Opening", tools: [
    { icon: "byFace", label: "By Face", width: 34 },
    { icon: "shaft", label: "Shaft", width: 28 },
  ], rows: [
    { icon: "openWall", label: "Wall" }, { icon: "vertical", label: "Vertical" }, { icon: "dormer", label: "Dormer" },
  ] },
  { title: "Datum", tools: [], rows: [
    { icon: "level", label: "Level", off: true }, { icon: "grid", label: "Grid", off: true },
  ] },
  { title: "Work Plane", tools: [{ icon: "set", label: "Set", width: 32 }], rows: [
    { icon: "show", label: "Show" }, { icon: "refPlane", label: "Ref  Plane", off: true }, { icon: "viewer", label: "Viewer" },
  ] },
];

@customElement("ribbon-bar")
class RibbonBar extends LitElement {
  static styles = [base, css`
    :host { display: block; background: #ebebeb; }
    nav { display: flex; height: 15px; background: #cbcbcb; }
    .tab { height: 15px; padding: 0 7px; white-space: nowrap; line-height: 15px; }
    .roomy { padding: 0 8px; }
    .file { width: 34px; margin-right: 1px; padding: 0; background: #2a7ab8; color: #fff; }
    .current { background: #ededed; }
    .mini { display: flex; align-items: center; padding: 0 16px; }
    .panels { display: flex; height: 76px; border-bottom: 1px solid #dadada; }
    .panel { display: flex; flex-direction: column; border-right: 1px solid #dddfe1; }
    .panel:last-child { flex: 1; border: 0; }
    .tools { display: flex; height: 61px; }
    .title { display: flex; align-items: center; justify-content: center; height: 15px; white-space: nowrap; }
    .tool { position: relative; display: flex; flex-direction: column; align-items: center; padding-top: 5px; line-height: 13px; }
    .label { margin-top: 4px; width: min-content; }
    .on { background: #b6d7f3; box-shadow: inset 0 0 0 1px #4c94d4; height: 56px; margin: 3px 5px 0 4px; padding-top: 2px; }
    .below { margin-top: -4px; }
    .side { position: absolute; right: -2px; bottom: 8px; }
    .rows { display: flex; flex-direction: column; justify-content: center; padding: 2px 4px 0 2px; }
    .solo { padding: 2px 6px 0; }
    .row { display: flex; align-items: center; gap: 3px; height: 20px; white-space: pre; text-align: left; }
    .off { color: #b5b5b5; }
    .under { height: 22px; background: #efefef; border-bottom: 1px solid #c4c4c4; }
  `];
  render() {
    return html`
      <nav>
        <button class="tab file">File</button>
        ${TABS.map((t, i) => html`<button class="tab ${i === 0 ? "current" : ""}">${t}</button>`)}
        ${MORE_TABS.map(t => html`<button class="tab roomy">${t}</button>`)}
        <button class="mini" aria-label="Minimize ribbon">${small("cursorTab")}${small("caret")}</button>
      </nav>
      <div class="panels">
        ${PANELS.map(p => html`
          <section class="panel">
            <div class="tools">
              ${p.tools.map(t => html`
                <button class="tool ${t.off ? "off" : ""} ${t.on ? "on" : ""}" style="width:${t.width}px" ?disabled=${t.off}>
                  ${big(t.icon)}<span class="label">${t.label}</span>
                  ${t.caret ? html`<span class=${t.caret}>${small("caret")}</span>` : nothing}
                </button>`)}
              ${p.rows ? html`<div class="rows ${p.tools.length ? "" : "solo"}">${p.rows.map(r => html`
                <button class="row ${r.off ? "off" : ""}" ?disabled=${r.off}>${small(r.icon)}<span>${r.label}</span>${r.caret ? small("caret") : nothing}</button>`)}</div>` : nothing}
            </div>
            <div class="title">${p.title}${p.caret ? small("caretBig") : nothing}</div>
          </section>`)}
      </div>
      <div class="under"></div>`;
  }
}

/* ---------- properties palette ---------- */

type Prop = [name: string, value: string, kind?: "input" | "button" | "off"];
const PROPS: Prop[] = [
  ["View Scale", "1 : 100", "input"], ["Scale Value    1:", "100", "off"], ["Detail Level", "Medium"],
  ["Parts Visibility", "Show Original"], ["Visibility/Graphics Overri...", "Edit...", "button"],
  ["Graphic Display Options", "Edit...", "button"], ["Discipline", "Coordination"], ["Show Hidden Lines", "By Discipline"],
];

const palette = css`
  header { display: flex; align-items: center; height: 16px; padding-left: 1px; background: #ebebeb; white-space: nowrap; }
  h2 { flex: 1; margin: 0; font-size: 9px; font-weight: 400; }
  .scroll { display: flex; flex-direction: column; justify-content: space-between; width: 14px; background: #edf1f3; }
  .thumb { background: #cbcbcb; margin: 0 1px; }
`;

@customElement("properties-palette")
class PropertiesPalette extends LitElement {
  static styles = [base, palette, css`
    :host { display: block; background: #ebebeb; }
    .type { display: flex; align-items: center; gap: 4px; height: 54px; margin: 0 1px; padding-left: 1px; background: #edf1f3; border-top: 1px solid #dcdfe1; }
    .thumbnail { display: grid; place-items: center; width: 51px; height: 51px; border: 1px solid #d5d9dc; }
    .type span { flex: 1; }
    .instance { display: flex; height: 19px; align-items: center; gap: 2px; color: #111; }
    .pick { display: flex; align-items: center; width: 198px; height: 17px; background: #dadcdc; border: 1px solid #c2c5c7; }
    .pick select { flex: 1; appearance: none; padding-left: 1px; height: 15px; }
    .edit { display: flex; align-items: center; gap: 1px; white-space: nowrap; }
    .body { display: flex; height: 134px; background: #fff; overflow: hidden; }
    .sheet { flex: 1; overflow: hidden; }
    .group { display: flex; align-items: center; justify-content: space-between; height: 15px; padding-left: 1px; background: #d9dbda; color: #111; }
    table { width: 100%; border-collapse: collapse; table-layout: fixed; color: #111; }
    th, td { height: 15px; padding: 0; font-weight: 400; text-align: left; border-bottom: 1px solid #dcdcdc; line-height: 14px; white-space: pre; overflow: hidden; }
    th { width: 117px; padding-left: 5px; }
    td { padding-left: 1px; border-left: 1px solid #c9c9c9; }
    .end { width: 9px; }
    .off { color: #8b8b8b; }
    input { display: block; width: 117px; height: 14px; padding-left: 3px; border: 1px solid #333; }
    td button { display: block; width: 116px; height: 14px; background: #dfe0e0; border: 1px solid #a9a9a9; border-top-color: #eee; border-left-color: #eee; }
    .scroll .thumb { height: 24px; margin-bottom: auto; }
    footer { display: flex; justify-content: space-between; align-items: flex-start; height: 21px; padding: 1px 2px 0 1px; }
    a { color: #1c7cd0; line-height: 14px; }
    .apply { width: 54px; height: 17px; background: #c8c8c8; color: #8c8c8c; }
  `];
  private value(n: string, v: string, kind: Prop[2], i: number) {
    if (kind === "input") return html`<input id="p${i}" .value=${v}>`;
    if (kind === "button") return html`<button id="p${i}" aria-label="${n} edit">${v}</button>`;
    return v;
  }
  render() {
    return html`
      <header><h2>Properties</h2><button aria-label="Close properties">${small("close")}</button></header>
      <div class="type"><div class="thumbnail">${big("house")}</div><span>3D View</span>${small("caretBig")}</div>
      <div class="instance">
        <div class="pick"><select aria-label="View instance"><option>3D View: {3D}</option></select>${small("chevThin")}</div>
        <button class="edit">${small("editType")}Edit Type</button>
      </div>
      <div class="body">
        <div class="sheet">
          <div class="group">Graphics${small("collapse")}</div>
          <table><tbody>${PROPS.map(([n, v, k], i) => html`
            <tr class=${k === "off" ? "off" : ""}><th scope="row">${k === "input" || k === "button" ? html`<label for="p${i}">${n}</label>` : n}</th><td>${this.value(n, v, k, i)}</td><td class="end"></td></tr>`)}
          </tbody></table>
        </div>
        <div class="scroll">${small("chevUp")}<div class="thumb"></div>${small("chevDown")}</div>
      </div>
      <footer><a href="#help">Properties help</a><button class="apply" disabled>Apply</button></footer>`;
  }
}

/* ---------- project browser ---------- */

type Node = [depth: 0 | 1 | 2, label: string, flag?: "last" | "closed" | "selected"];
const NODES: Node[] = [
  [0, "Views (all)"], [1, "Floor Plans"], [2, "Level 1"], [2, "Level 2"], [2, "Site", "selected"],
  [2, "T.O. Fnd. Wall"], [2, "T.O. Footing"], [2, "T.O. Slab", "last"], [1, "Ceiling Plans"], [2, "Level 1"],
  [2, "Level 2", "last"], [1, "3D Views", "closed"], [1, "Elevations (Building Elevation)"], [2, "East"],
  [2, "North"], [2, "South"], [2, "West"],
];

@customElement("project-browser")
class ProjectBrowser extends LitElement {
  static styles = [base, palette, css`
    :host { display: flex; flex-direction: column; min-height: 0; background: #ebebeb; border-top: 1px solid #c4c4c4; }
    .body { flex: 1; display: flex; min-height: 0; overflow: hidden; background: #fff; }
    ul { flex: 1; display: grid; grid-auto-rows: 1fr; height: 235px; margin: 0; padding: 0; list-style: none; color: #111; }
    li { display: flex; align-items: center; min-height: 0; white-space: nowrap; }
    .d0 { padding-left: 1px; }
    .d1 { padding-left: 18px; }
    .box { display: grid; place-items: center; width: 9px; height: 9px; border: 1px solid #a8adb3; background: #f6f8fa; }
    .box svg { width: 7px; height: 7px; }
    .dash { width: 6px; height: 1px; margin-right: 2px; background: #cfd6de; }
    .d0 .dash { width: 4px; margin-right: 1px; }
    .d0 .s { margin-right: 3px; }
    .trunk { align-self: stretch; width: 16px; margin-left: 22px; border-left: 1px solid #d5dce4; }
    .branch { align-self: stretch; width: 12px; margin-right: 2px;
      background: linear-gradient(#cfd6de, #cfd6de) 0 50% / 100% 1px no-repeat, linear-gradient(#cfd6de, #cfd6de) 0 0 / 1px 100% no-repeat; }
    .last .branch { background-size: 100% 1px, 1px 50%; }
    .selected .text { background: #e4e4e6; }
    .scroll .thumb { flex: 1; margin-bottom: 60px; }
  `];
  render() {
    return html`
      <header><h2>Project Browser - My Project File- Finalized all items.rvt</h2><button aria-label="Close browser">${small("close")}</button></header>
      <div class="body">
        <ul role="tree">${NODES.map(([d, label, flag]) => html`
          <li role="treeitem" class="d${d} ${flag ?? ""}">
            ${d < 2
              ? html`<span class="box"><svg viewBox="0 0 7 7"><path d=${flag === "closed" ? "M1 3.500h5M3.500 1v5" : "M1 3.500h5"} stroke="#3b6ea5"/></svg></span><span class="dash"></span>`
              : html`<span class="trunk"></span><span class="branch"></span>`}
            ${d === 0 ? small("views") : nothing}<span class="text">${label}</span>
          </li>`)}
        </ul>
        <div class="scroll">${small("chevUp")}<div class="thumb"></div>${small("chevDown")}</div>
      </div>`;
  }
}

/* ---------- 3D view ---------- */

const OUTLINE = "M37 583L38 543L66 485L112 375L145 318L232 210L300 130L388 88L425 78L452 68L500 62L535 48L600 44L920 28L1010 36L1468 87L1492 99L1517 147L1327 563L1246 634L1180 668L485 1002L420 1008L345 1005L245 990L241 970L231 972L195 915Z";

@customElement("model-view")
class ModelView extends LitElement {
  static styles = [base, css`
    :host { display: flex; flex-direction: column; min-width: 0; min-height: 0; background: #fff; }
    .tabs { display: flex; height: 16px; background: #cbcbcb; }
    .tab { display: flex; align-items: center; gap: 5px; width: 100px; padding-left: 2px; }
    .current { background: #fff; font-weight: 700; }
    .current span { flex: 1; text-align: left; }
    .menu { margin-left: auto; }
    .middle { flex: 1; display: flex; min-height: 0; }
    .canvas { position: relative; flex: 1; min-width: 0; }
    .scene { width: 100%; height: 100%; }
    .cube { position: absolute; top: 31px; right: 14px; width: 84px; height: 72px; }
    .wheel { position: absolute; top: 108px; right: 0; width: 24px; height: 76px; }
    .vscroll { display: flex; flex-direction: column; width: 13px; background: #edf1f3; }
    .vthumb { height: 13px; margin: auto 0; background: #cbcbcb; }
    .control { display: flex; align-items: center; height: 13px; background: #edf1f3; color: #111; }
    .scale { width: 57px; padding-left: 17px; text-align: left; white-space: nowrap; }
    .icons { display: flex; justify-content: space-between; width: 217px; }
    .icons .s { width: 13px; height: 13px; }
    .hscroll { flex: 1; display: flex; align-items: center; height: 13px; }
    .hthumb { width: 13px; height: 13px; margin: 0 auto; background: #cbcbcb; }
  `];
  render() {
    return html`
      <div class="tabs">
        <button class="tab current">${small("house")}<span>{3D}</span>${small("close")}</button>
        <button class="tab">${small("page")}<span>Level 1</span></button>
        <button class="tab">${small("page")}<span>Site</span></button>
        <button class="menu" aria-label="View list">${small("customise")}</button>
      </div>
      <div class="middle">
        <div class="canvas">
          <svg class="scene" viewBox="262 149 925 458" role="img" aria-label="Toposurface">
            <defs>
              <clipPath id="land"><path d=${OUTLINE}/></clipPath>
              <filter id="soft" x="-20%" y="-20%" width="140%" height="140%"><feGaussianBlur stdDeviation="14"/></filter>
              <filter id="soft2" x="-20%" y="-20%" width="140%" height="140%"><feGaussianBlur stdDeviation="3"/></filter>
              <pattern id="dots" width="22" height="19" patternUnits="userSpaceOnUse">
                <path d="M1 2h4M9 1v4M4 8v4M12 9h4M1 16h3M15 3h4M18 12v4M9 14h4" stroke="#96612f" stroke-width="2.500"/>
              </pattern>
            </defs>
            <g transform="translate(480 225) scale(.338 .3333)">
              <path d=${OUTLINE} fill="#6d5034"/>
              <g clip-path="url(#land)">
                <g filter="url(#soft)">
                  <path d="M930 110L1300 110L1560 90V600L1200 680L480 1040L400 960L560 760L740 600L900 520L980 400L970 230Z" fill="#765638"/>
                  <path d="M300 110L520 50L530 150L450 270L350 380L270 425L220 370L150 350L60 500L20 500L150 300Z" fill="#62482f"/>
                  <path d="M390 95L510 80L480 170L360 300L310 340L280 280L340 180Z" fill="#5a432b"/>
                  <path d="M100 370L150 350L130 470L60 500Z" fill="#5d452c"/>
                  <path d="M690 220Q820 180 880 260Q930 380 880 500Q760 580 640 520Q600 380 690 220Z" fill="#694c31"/>
                  <path d="M200 890L300 900L470 960L480 1010H250Z" fill="#634830"/>
                </g>
                <path d="M770 335L826 378L795 440L768 505L718 514L705 450L715 380Z" fill="#62472e"/>
                <g filter="url(#soft2)">
                  <path d="M395 105L450 100L440 150L350 215L325 212L345 165Z" fill="#573f29"/>
                  <path d="M240 360L330 350L345 385L270 425Z" fill="#61472e"/>
                  <path d="M1012 440L1060 445L1072 600L1032 605Z" fill="#60462e"/>
                  <path d="M1122 480L1145 500L1135 600L1105 600Z" fill="#664a30"/>
                  <path d="M1200 545L1250 575L1240 625L1190 610Z" fill="#6e5034"/>
                  <path d="M877 528L925 525L942 645L895 658Z" fill="#60462e"/>
                  <path d="M748 610L790 615L804 700L758 705Z" fill="#684c32"/>
                  <path d="M205 915L280 920L235 968Z" fill="#553e29"/>
                  <path d="M290 935L322 922L333 975L305 985Z" fill="#513b27"/>
                  <path d="M340 945L405 945L355 1002Z" fill="#543e2a"/>
                  <path d="M215 880L300 900L280 925L215 920Z" fill="#5e452c"/>
                  <path d="M243 215L248 240L215 262Z" fill="#523c28"/>
                  <path d="M1420 178L1418 200L1402 208Z" fill="#5f452d"/>
                </g>
                <path d="M1083 425L1126 480L1105 608L1080 603Z" fill="#483524"/>
                <path d="M1156 478L1198 530L1184 612L1153 614Z" fill="#4d3926"/>
                <path d="M735 711L784 713L760 719Z" fill="#3d2c1d"/>
                <path d="M1390 160L1388 270L1330 460L1300 578L1250 570L1180 500L1108 390L1140 290L1190 235L1265 200L1320 215Z" fill="url(#dots)"/>
                <path d="M470 930L562 922L540 970L490 995L510 955ZM560 820L580 830L566 872ZM700 665L714 700L738 728L722 730L702 700Z" fill="url(#dots)"/>
              </g>
              <path d="M582 235L535 290L463 388L474 455L499 566L475 670L440 708L385 758L240 802L152 818" fill="none" stroke="#50585a" stroke-width="4"/>
            </g>
          </svg>
          <svg class="cube" viewBox="84 150 252 216" role="img" aria-label="View cube">
            <defs><filter id="sh"><feGaussianBlur stdDeviation="7"/></filter></defs>
            <path fill-rule="evenodd" d="M89 275a121 84 0 1 0 242 0a121 84 0 1 0-242 0zM120 275a90 58 0 1 0 180 0a90 58 0 1 0-180 0z" fill="#edf1f3" stroke="#c3c5c7" stroke-width="3" stroke-dasharray="7 3"/>
            <ellipse cx="212" cy="285" rx="66" ry="30" fill="#b9b9b9" filter="url(#sh)"/>
            <g fill="none" stroke="#a8abae" stroke-width="3"><path d="M106 332l12-18 10 18 16-20h-20M112 318l28 12M272 315l14 18 10-20 14 24M272 312h24l14 24M124 230l14-10 6 14M275 222l14 8 4-12"/></g>
            <path d="M210 159L275 188L209 228L144 193Z" fill="#f1f1f1" stroke="#8a8a8a" stroke-width="3"/>
            <path d="M144 193L209 228V306L148 270Z" fill="#e3e3e3" stroke="#8a8a8a" stroke-width="3"/>
            <path d="M275 188L209 228V306L273 268Z" fill="#eeeeee" stroke="#8a8a8a" stroke-width="3"/>
            <g fill="#6d6d6d" font-family="Roboto, sans-serif" font-size="20">
              <text transform="translate(152 246) skewY(29)">BACK</text>
              <text transform="translate(222 268) skewY(-31)">LEFT</text>
              <text transform="translate(222 182) rotate(195) skewX(-20)">TOP</text>
            </g>
          </svg>
          <svg class="wheel" viewBox="0 0 24 76" role="img" aria-label="Navigation bar">
            <rect x="1" y="1" width="22" height="73" rx="3" fill="#edf1f3" stroke="#adadad" stroke-width="1.200"/>
            <circle cx="18.500" cy="5" r="2" fill="#ddd" stroke="#999"/><circle cx="18.500" cy="69" r="2" fill="#ddd" stroke="#999"/>
            <path d="M12 14h6.500v7a6.500 6.500 0 1 1-6.500-7z" fill="#f3f3f3" stroke="#999" stroke-width="1.200"/><circle cx="12" cy="20.500" r="3.800" fill="#fff" stroke="#999" stroke-width="1.200"/>
            <path d="M10.500 33h3L12 35zM10.500 59h3L12 61z" fill="#777"/><path d="M4 37.500h16" stroke="#c2c2c2"/>
            <rect x="7" y="43" width="7" height="6" fill="#9fca9a" stroke="#87906f"/><circle cx="14" cy="49" r="2.300" fill="#eee" stroke="#888"/><path d="M15.500 50.500l2 2.500" stroke="#888" stroke-width="1.300"/>
          </svg>
        </div>
        <div class="vscroll">${small("chevUp")}<div class="vthumb"></div>${small("chevDown")}</div>
      </div>
      <div class="control">
        <button class="scale">1 : 100</button>
        <div class="icons">${["detail", "style", "sun", "shadow", "render", "crop", "cropShow", "lock", "glasses", "bulb",
          "tempProps", "analytical", "displace", "constraints"].map(small)}</div>
        <div class="hscroll">${small("chevLeft")}<div class="hthumb"></div>${small("chevRight")}</div>
        ${small("grip")}
      </div>`;
  }
}

/* ---------- status bar ---------- */

@customElement("status-bar")
class StatusBar extends LitElement {
  @property() message = "";
  static styles = [base, css`
    :host { display: flex; align-items: center; height: 22px; background: #cbcbcb; border-top: 1px solid #dedede; color: #1b1b1b; white-space: nowrap; }
    .message { width: 428px; }
    .pick { display: flex; align-items: center; width: 160px; height: 16px; margin: 0 5px; background: #fff; border: 1px solid #d5d5d5; color: #8a8a8a; }
    select { flex: 1; height: 14px; appearance: none; padding-left: 1px; }
    .drop { border-left: 1px solid #e6e6e6; }
    .count { width: 23px; padding-left: 1px; }
    .gap { width: 4px; }
    .filters { display: flex; gap: 5px; margin-left: auto; align-items: center; }
    .total { width: 56px; margin-left: -5px; }
  `];
  render() {
    return html`
      <span class="message">${this.message}</span>
      ${small("people")}
      <div class="pick"><select aria-label="Workset"><option></option></select><span class="drop">${small("chevThin")}</span></div>
      ${small("pencilGrey")}<span class="count">:0</span>
      ${small("options")}<span class="gap"></span>${small("optionsGrey")}
      <div class="pick"><select aria-label="Design option"><option>Main Model</option></select><span class="drop">${small("chevThin")}</span></div>
      <div class="filters">
        ${["selLinks", "selUnderlay", "selPinned", "selFace", "selDrag", "gear", "filter"].map(small)}
        <span class="total">:0</span>
      </div>`;
  }
}

@customElement("app-root")
class AppRoot extends LitElement {
  static styles = css`
    :host { display: flex; flex-direction: column; height: 100vh; overflow: hidden; background: #ebebeb; color: #404040;
      font: 9px/12px "Open Sans", "Noto Sans", sans-serif; }
    main { flex: 1; display: flex; min-height: 0; border-bottom: 2px solid #e4e4e4; }
    aside { display: flex; flex-direction: column; width: 259px; padding-right: 2px; border-right: 1px solid #c9c9c9; }
    project-browser { flex: 1; }
    model-view { flex: 1; }
  `;
  render() {
    return html`
      <title-bar></title-bar>
      <ribbon-bar></ribbon-bar>
      <main>
        <aside><properties-palette></properties-palette><project-browser></project-browser></aside>
        <model-view></model-view>
      </main>
      <status-bar message="Hold button and move mouse to Scroll the view. Hold Ctrl key to Zoom. Hold Shift key to Spin."></status-bar>`;
  }
}
